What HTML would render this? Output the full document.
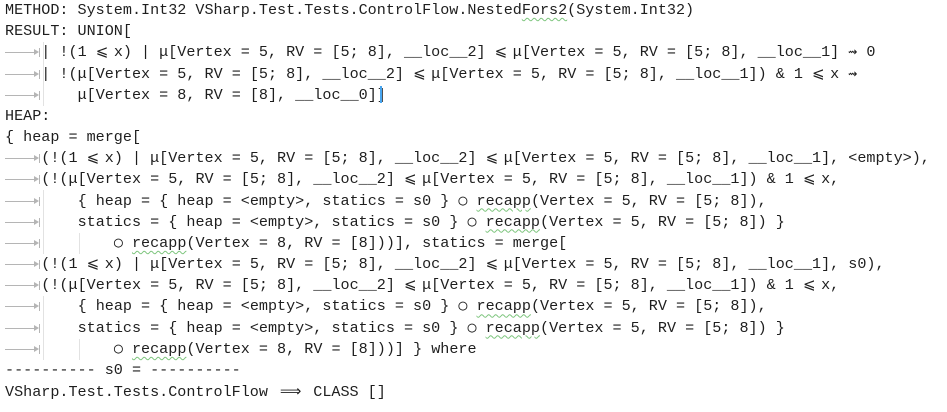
<!DOCTYPE html>
<html><head><meta charset="utf-8"><style>
html,body{margin:0;padding:0;background:#fff;width:947px;height:412px;overflow:hidden}
pre{margin:0;padding:0 0 0 5px;font-family:"Liberation Mono","DejaVu Sans Mono",monospace;font-size:15.12px;line-height:21.17px;color:#1e1e1e;white-space:pre;position:relative}
.t{display:inline-block;width:36.3px;height:21px;vertical-align:top;position:relative}
.t:before{content:"";position:absolute;left:0;top:10px;width:30px;height:1px;background:#b5b5b5}
.t:after{content:"";position:absolute;left:29px;top:7px;width:0;height:0;border-left:5px solid #b5b5b5;border-top:3.5px solid transparent;border-bottom:3.5px solid transparent}
.t i{position:absolute;left:34px;top:6px;width:1px;height:9px;background:#b5b5b5}
.c{display:inline-block;width:9.07px;text-align:center;font-family:"DejaVu Sans Mono","DejaVu Sans",monospace;font-size:15px;line-height:1}
.c3{display:inline-block;width:27.2px;text-align:center;font-family:"DejaVu Sans",sans-serif;font-size:15px}
.w{text-decoration:underline wavy #7cc47c;text-decoration-thickness:1px;text-underline-offset:3px}
.g{position:absolute;width:1px;background:#e2e2e2}
.cur{position:absolute;left:380px;top:86px;width:2px;height:17px;background:#49a6f0}
</style></head><body>
<pre><div class="g" style="left:43px;top:42px;height:64px"></div><div class="g" style="left:43px;top:190px;height:64px"></div><div class="g" style="left:79px;top:233px;height:21px"></div><div class="g" style="left:43px;top:296px;height:64px"></div><div class="g" style="left:79px;top:339px;height:21px"></div><div class="cur"></div>METHOD: System.Int32 VSharp.Test.Tests.ControlFlow.Nested<span class="w">Fors2</span>(System.Int32)
RESULT: UNION[
<span class="t"><i></i></span>| !(1 <span class="c">⩽</span> x) | μ[Vertex = 5, RV = [5; 8], __loc__2] <span class="c">⩽</span> μ[Vertex = 5, RV = [5; 8], __loc__1] <span class="c">⇝</span> 0
<span class="t"><i></i></span>| !(μ[Vertex = 5, RV = [5; 8], __loc__2] <span class="c">⩽</span> μ[Vertex = 5, RV = [5; 8], __loc__1]) &amp; 1 <span class="c">⩽</span> x <span class="c">⇝</span>
<span class="t"><i></i></span>    μ[Vertex = 8, RV = [8], __loc__0]]
HEAP:
{ heap = merge[
<span class="t"><i></i></span>(!(1 <span class="c">⩽</span> x) | μ[Vertex = 5, RV = [5; 8], __loc__2] <span class="c">⩽</span> μ[Vertex = 5, RV = [5; 8], __loc__1], &lt;empty&gt;),
<span class="t"><i></i></span>(!(μ[Vertex = 5, RV = [5; 8], __loc__2] <span class="c">⩽</span> μ[Vertex = 5, RV = [5; 8], __loc__1]) &amp; 1 <span class="c">⩽</span> x,
<span class="t"><i></i></span>    { heap = { heap = &lt;empty&gt;, statics = s0 } <span class="c">○</span> <span class="w">recapp</span>(Vertex = 5, RV = [5; 8]),
<span class="t"><i></i></span>    statics = { heap = &lt;empty&gt;, statics = s0 } <span class="c">○</span> <span class="w">recapp</span>(Vertex = 5, RV = [5; 8]) }
<span class="t"><i></i></span>        <span class="c">○</span> <span class="w">recapp</span>(Vertex = 8, RV = [8]))], statics = merge[
<span class="t"><i></i></span>(!(1 <span class="c">⩽</span> x) | μ[Vertex = 5, RV = [5; 8], __loc__2] <span class="c">⩽</span> μ[Vertex = 5, RV = [5; 8], __loc__1], s0),
<span class="t"><i></i></span>(!(μ[Vertex = 5, RV = [5; 8], __loc__2] <span class="c">⩽</span> μ[Vertex = 5, RV = [5; 8], __loc__1]) &amp; 1 <span class="c">⩽</span> x,
<span class="t"><i></i></span>    { heap = { heap = &lt;empty&gt;, statics = s0 } <span class="c">○</span> <span class="w">recapp</span>(Vertex = 5, RV = [5; 8]),
<span class="t"><i></i></span>    statics = { heap = &lt;empty&gt;, statics = s0 } <span class="c">○</span> <span class="w">recapp</span>(Vertex = 5, RV = [5; 8]) }
<span class="t"><i></i></span>        <span class="c">○</span> <span class="w">recapp</span>(Vertex = 8, RV = [8]))] } where
---------- s0 = ----------
VSharp.Test.Tests.ControlFlow <span class="c3">⟹</span> CLASS []</pre>
</body></html>
